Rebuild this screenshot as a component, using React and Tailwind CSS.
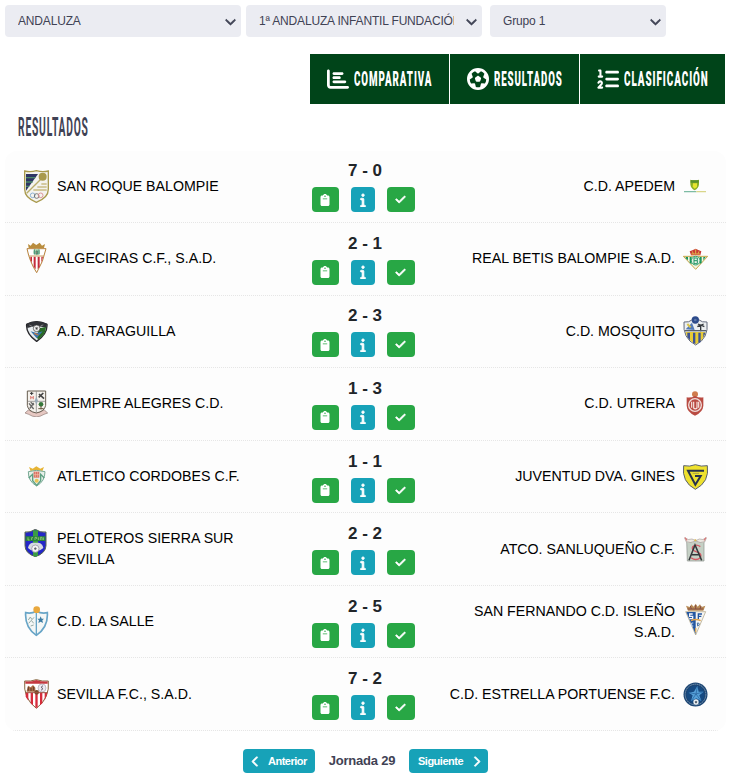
import {
  FaChartBar,
  FaCheck,
  FaChevronDown,
  FaChevronLeft,
  FaChevronRight,
  FaClipboard,
  FaFutbol,
  FaInfo,
  FaListOl,
} from "react-icons/fa6";

const crests = {
  sanRoque: (
    <svg width="25" height="33" viewBox="0 0 75 99">
      <path d="M2 3Q20 7 37 2Q55 7 73 3V58Q73 84 37 97Q2 84 2 58Z" fill="#f4f3ee" stroke="#a99a4d" strokeWidth="4" />
      <path d="M6 12H42L6 62Z" fill="#2e3564" />
      <path d="M6 23H34M6 36H26M6 49H16" stroke="#4b8a68" strokeWidth="4" />
      <path d="M58 20L8 70" stroke="#b9ad6c" strokeWidth="4" />
      <circle cx="56" cy="20" r="12" fill="#a99a4d" />
      <path d="M52 42H68M40 51H68M28 60H68" stroke="#c9bd85" strokeWidth="4" />
      <g fill="none" strokeWidth="2.5">
        <circle cx="26" cy="76" r="7" stroke="#7aa5cf" />
        <circle cx="38" cy="78" r="7" stroke="#666" />
        <circle cx="50" cy="76" r="7" stroke="#d8848a" />
      </g>
    </svg>
  ),
  algeciras: (
    <svg width="25" height="33" viewBox="0 0 75 99">
      <path d="M14 18L12 6L20 11L27 2L37 9L47 2L54 11L63 6L60 18Z" fill="#b98d3e" />
      <path d="M9 20H66Q58 60 38 92Q17 60 9 20Z" fill="#fff" stroke="#b7813b" strokeWidth="3" />
      <path d="M19 44H24V63L19 52ZM29 44H35V82L29 74ZM41 44H47V74L41 82ZM52 44H57L52 63Z" fill="#c42b3a" />
      <circle cx="38" cy="30" r="10" fill="#b8d3b0" />
      <path d="M31 22V37M45 22V37M36 27H41V36H36Z" stroke="#3d9276" strokeWidth="3" fill="#d66" />
      <path d="M15 42H60" stroke="#ca9d65" strokeWidth="3" />
    </svg>
  ),
  taraguilla: (
    <svg width="25" height="21" viewBox="0 0 75 63">
      <path d="M8 10Q37 -6 69 10Q71 38 38 61Q5 38 8 10Z" fill="#e8edf0" stroke="#29292d" strokeWidth="4" />
      <path d="M8 8Q37 -5 69 8L67 21Q38 10 10 21Z" fill="#303237" />
      <path d="M46 22L66 18Q66 40 42 56L38 47Z" fill="#286b25" />
      <path d="M20 31L38 36L56 31L38 52Z" fill="#3976ad" />
      <path d="M31 37L43 42" stroke="#c77743" strokeWidth="4" />
      <circle cx="38" cy="22" r="10" fill="#f4f4f4" stroke="#333" strokeWidth="2" />
      <path d="M34 19H42L40 26H36ZM16 12L24 16M50 14L58 12" fill="#333" stroke="#aaa" strokeWidth="2" />
    </svg>
  ),
  siempreAlegres: (
    <svg width="25" height="27" viewBox="0 0 75 81">
      <path d="M3 69L13 60Q37 74 61 60L71 69L60 73Q37 88 14 73Z" fill="#e6c8c2" stroke="#8e7773" strokeWidth="2" />
      <path d="M10 3H65V46Q62 64 37 69Q12 64 10 46Z" fill="#f5f2ed" stroke="#675d50" strokeWidth="3" />
      <path d="M37 4V68M10 34H64" stroke="#777" strokeWidth="2" />
      <path d="M18 10H28M23 6V15" stroke="#333" strokeWidth="3" />
      <path d="M20 18V28M28 18V28M20 23H28" stroke="#e1938c" strokeWidth="4" />
      <path d="M44 22L58 9M45 12L60 26" stroke="#444" strokeWidth="5" />
      <path d="M15 40L29 57M29 39L17 56M20 37L30 45" stroke="#666" strokeWidth="4" />
      <circle cx="51" cy="43" r="7" fill="#36773c" />
      <path d="M51 48V58M43 56H59" stroke="#66563f" strokeWidth="3" />
      <path d="M32 32L37 20L42 32L37 44Z" fill="#9aabb9" />
    </svg>
  ),
  cordobes: (
    <svg width="25" height="21" viewBox="0 0 75 63">
      <path d="M20 16L15 3L26 8L37 1L49 8L60 3L55 16Z" fill="#e7b434" />
      <path d="M13 17Q37 9 63 17Q63 46 38 60Q12 46 13 17Z" fill="#e6efe8" stroke="#79aa95" strokeWidth="3" />
      <path d="M14 36L26 25V44L38 58L50 44V25L61 36" fill="none" stroke="#5d9f82" strokeWidth="4" />
      <rect x="29" y="17" width="17" height="18" fill="#db6d61" />
      <path d="M34 18V34M41 18V34M29 26H46" stroke="#f0c3a7" strokeWidth="2" />
      <circle cx="38" cy="44" r="6" fill="#e9c558" />
    </svg>
  ),
  peloteros: (
    <svg width="25" height="28" viewBox="0 0 75 84">
      <path d="M3 9Q18 12 34 1Q49 12 66 9V50Q65 73 34 83Q3 73 3 50Z" fill="#2427c8" stroke="#5a6850" strokeWidth="3" />
      <path d="M27 4H42V80L34 83L27 80Z" fill="#3b9c45" />
      <path d="M5 22H64V36H5Z" fill="#27843a" />
      <path d="M12 25V33H17M23 33V26H27M33 33V25H38V30M43 25V33M49 33V25H54V33M58 25V33" fill="none" stroke="#9cc87b" strokeWidth="2.5" />
      <path d="M12 57Q14 43 26 41H43Q56 43 58 57L48 64H21Z" fill="#d6d9e1" />
      <circle cx="34" cy="59" r="11" fill="#f4f4f4" stroke="#8a8a9c" strokeWidth="2" />
      <path d="M34 55L38 58L36 62H32L30 58Z" fill="#62626f" />
    </svg>
  ),
  laSalle: (
    <svg width="25" height="31" viewBox="0 0 75 93">
      <path d="M5 20Q21 24 37 16Q54 24 70 20Q73 64 37 88Q2 64 5 20Z" fill="#f4f7f6" stroke="#68a5c7" strokeWidth="5" />
      <path d="M37 18V86" stroke="#68a5c7" strokeWidth="4" />
      <circle cx="38" cy="11" r="10" fill="#e9a83d" />
      <path d="M50 31L53 38L60 38L55 43L57 51L50 47L43 51L45 43L40 38L47 38Z" fill="#3d7da4" />
      <path d="M13 42L19 33L24 41L30 34M14 52L22 43L29 52M20 60L29 57" fill="none" stroke="#96aaa4" strokeWidth="3" />
    </svg>
  ),
  sevilla: (
    <svg width="25" height="30" viewBox="0 0 75 90">
      <path d="M2 6Q20 8 37 2Q55 8 73 6Q78 58 37 88Q-3 58 2 6Z" fill="#fff" stroke="#85653e" strokeWidth="3" />
      <path d="M4 7Q20 9 37 3Q55 9 71 7V14H4Z" fill="#c5383f" />
      <path d="M5 42H13V65L5 53ZM20 42H27V79L20 73ZM34 42H41V86H34ZM48 42H55V73L48 79ZM62 42H70L62 65Z" fill="#d62c3c" />
      <path d="M8 36L12 20L20 25L27 18L34 26V38H8Z" fill="#a96c44" />
      <path d="M13 24V35M21 27V36M29 23V35" stroke="#623c2d" strokeWidth="3" />
      <circle cx="54" cy="27" r="12" fill="#eceaf0" stroke="#a8a4ae" strokeWidth="2" />
      <path d="M57 20L51 25L57 29L51 34" fill="none" stroke="#6a6470" strokeWidth="3" />
      <circle cx="38" cy="40" r="7" fill="#7a4a2b" />
      <path d="M4 41H71" stroke="#9d5041" strokeWidth="3" />
    </svg>
  ),
  apedem: (
    <svg width="25" height="14" viewBox="0 0 75 42">
      <path d="M22 2Q35 5 48 2V16Q47 28 35 34Q23 28 22 16Z" fill="#8caf22" />
      <path d="M23 4H47V11H23Z" fill="#5a912d" />
      <path d="M30 13H42V24L35 29L29 23Z" fill="#e8e530" />
      <path d="M3 38H40" stroke="#7dbba4" strokeWidth="4" />
      <path d="M40 38H69" stroke="#d9d68a" strokeWidth="4" />
    </svg>
  ),
  betis: (
    <svg width="25" height="22" viewBox="0 0 75 66">
      <path d="M1 25H74L38 64Z" fill="#f5f3df" stroke="#c5a64a" strokeWidth="3" />
      <path d="M8 27H15V37L8 31ZM20 27H26V49L20 44ZM50 27H56V44L50 49ZM61 27H68L61 37Z" fill="#16945b" />
      <circle cx="38" cy="38" r="13" fill="#e5f1e6" stroke="#3aa471" strokeWidth="3" />
      <path d="M33 29V48M33 30H43V38H33M43 38V47H33" fill="none" stroke="#249665" strokeWidth="3" />
      <path d="M24 22L20 10L30 6L38 2L46 6L55 10L52 22Z" fill="#c93b36" />
      <path d="M25 18H51M28 10L31 18M38 4V18M48 10L45 18" stroke="#dfb34a" strokeWidth="3" />
    </svg>
  ),
  mosquito: (
    <svg width="25" height="30" viewBox="0 0 75 90">
      <path d="M3 18Q18 20 28 11H47Q57 20 72 18Q78 67 38 87Q-2 67 3 18Z" fill="#eceff1" stroke="#646b7d" strokeWidth="3" />
      <path d="M8 48H67Q66 69 38 85Q10 69 8 48Z" fill="#e7cb35" />
      <path d="M13 50H21V73L13 64ZM30 50H37V84L30 80ZM46 50H53V78L46 81ZM61 50H67L61 66Z" fill="#3c5298" />
      <path d="M8 40L27 20L35 42Z" fill="#5279b7" />
      <path d="M13 24L23 34" stroke="#dac344" strokeWidth="6" />
      <path d="M53 46V27M43 32L53 27L64 32M45 24L53 28L62 24" fill="none" stroke="#35393e" strokeWidth="4" />
      <path d="M6 44H70" stroke="#59616c" strokeWidth="4" />
      <circle cx="37" cy="12" r="11" fill="#2d4b8b" />
      <circle cx="37" cy="12" r="4" fill="#5c76a8" />
    </svg>
  ),
  utrera: (
    <svg width="25" height="25" viewBox="0 0 75 75">
      <circle cx="36" cy="10" r="9" fill="#cf7b4d" />
      <path d="M11 19Q25 21 36 15Q48 21 61 19V44Q60 63 36 74Q12 63 11 44Z" fill="#b94b42" />
      <circle cx="36" cy="42" r="19" fill="#b94b42" stroke="#f0dedb" strokeWidth="4" />
      <path d="M26 32V50M32 32V51Q37 56 42 51V32M47 32V50" fill="none" stroke="#f6e5e0" strokeWidth="3.5" />
    </svg>
  ),
  gines: (
    <svg width="25" height="26" viewBox="0 0 75 78">
      <path d="M2 5Q20 9 37 2Q55 9 73 5Q80 54 37 76Q-5 54 2 5Z" fill="#eee12e" stroke="#596069" strokeWidth="3" />
      <path d="M63 20H15L37 62L53 36H36" fill="none" stroke="#27324c" strokeWidth="6" />
      <path d="M29 28H48" stroke="#aaa246" strokeWidth="3" />
    </svg>
  ),
  sanluqueno: (
    <svg width="25" height="26" viewBox="0 0 75 78">
      <path d="M11 15L23 18L37 12L51 18L63 15V75H13Z" fill="#c5d0c5" stroke="#8c918c" strokeWidth="2" />
      <path d="M5 5Q16 14 27 9L38 14L49 9Q60 14 70 5L66 17Q52 23 38 15Q23 23 9 17Z" fill="#ece8e2" stroke="#a69c97" strokeWidth="2" />
      <path d="M6 5L12 13M69 5L63 13" stroke="#d9797a" strokeWidth="4" />
      <path d="M52 32Q39 23 29 32Q25 42 39 47Q58 52 52 65Q39 76 24 65" fill="none" stroke="#d65863" strokeWidth="4" />
      <path d="M18 73L36 27L56 73M25 56H49" fill="none" stroke="#34383b" strokeWidth="4.5" />
      <circle cx="37" cy="13" r="3" fill="#e7bd45" />
    </svg>
  ),
  sanFernando: (
    <svg width="25" height="33" viewBox="0 0 75 99">
      <path d="M15 23L9 8L20 12L25 4L32 11L38 2L44 11L51 4L56 12L67 8L61 23Z" fill="#b78a55" />
      <path d="M14 18H61M22 9L25 18M38 6V18M54 9L51 18" stroke="#844d43" strokeWidth="3" />
      <path d="M8 26H68L38 96Z" fill="#f5f5f3" stroke="#a99c79" strokeWidth="2" />
      <path d="M10 27H38V94Z" fill="#2356a1" />
      <path d="M29 33H20V40H29V47H19" fill="none" stroke="#f2f4fa" strokeWidth="4" />
      <path d="M46 48V33H57M46 40H55" fill="none" stroke="#2356a1" strokeWidth="4" />
      <path d="M24 53Q38 46 53 53" fill="none" stroke="#e1a14a" strokeWidth="4" />
      <path d="M31 60H26V69H31" fill="none" stroke="#c4d5ec" strokeWidth="3" />
      <path d="M43 60H47L49 65L44 69Z" fill="none" stroke="#4772a8" strokeWidth="3" />
      <path d="M38 75V88" stroke="#d7a656" strokeWidth="4" />
    </svg>
  ),
  estrella: (
    <svg width="25" height="25" viewBox="0 0 75 75">
      <circle cx="37.5" cy="37.5" r="36" fill="#1c4573" />
      <circle cx="37.5" cy="37.5" r="31" fill="none" stroke="#83a0ba" strokeWidth="3" strokeDasharray="4 2" />
      <circle cx="37.5" cy="37.5" r="27" fill="#164a82" />
      <path d="M43 12L47 29L62 29L49 40L55 57L40 49L24 57L29 40L17 32L33 29Z" fill="#55a0d8" />
      <path d="M43 14L39 36M60 30L39 36M53 55L39 36M26 55L39 36M19 32L39 36" stroke="#245e99" strokeWidth="2" />
      <circle cx="39" cy="60" r="8" fill="#edf1f4" />
      <path d="M39 56L43 59L41 64H37L35 59Z" fill="#53606d" />
    </svg>
  ),
};

const matches = [
  { home: "SAN ROQUE BALOMPIE", homeCrest: "sanRoque", score: "7 - 0", away: "C.D. APEDEM", awayCrest: "apedem" },
  { home: "ALGECIRAS C.F., S.A.D.", homeCrest: "algeciras", score: "2 - 1", away: "REAL BETIS BALOMPIE S.A.D.", awayCrest: "betis" },
  { home: "A.D. TARAGUILLA", homeCrest: "taraguilla", score: "2 - 3", away: "C.D. MOSQUITO", awayCrest: "mosquito" },
  { home: "SIEMPRE ALEGRES C.D.", homeCrest: "siempreAlegres", score: "1 - 3", away: "C.D. UTRERA", awayCrest: "utrera" },
  { home: "ATLETICO CORDOBES C.F.", homeCrest: "cordobes", score: "1 - 1", away: "JUVENTUD DVA. GINES", awayCrest: "gines" },
  { home: "PELOTEROS SIERRA SUR SEVILLA", homeCrest: "peloteros", score: "2 - 2", away: "ATCO. SANLUQUEÑO C.F.", awayCrest: "sanluqueno", homeLift: "pb-3" },
  { home: "C.D. LA SALLE", homeCrest: "laSalle", score: "2 - 5", away: "SAN FERNANDO C.D. ISLEÑO S.A.D.", awayCrest: "sanFernando", awayLift: "pb-[5px]" },
  { home: "SEVILLA F.C., S.A.D.", homeCrest: "sevilla", score: "7 - 2", away: "C.D. ESTRELLA PORTUENSE F.C.", awayCrest: "estrella" },
];

function Select({ label, className }) {
  return (
    <button
      className={`flex h-8 items-center justify-between rounded bg-[#ebecf2] pl-[13px] pr-[5px] text-xs tracking-[-0.17px] text-[#3f4254] ${className}`}
    >
      <span className="mr-3 flex-1 overflow-hidden whitespace-nowrap text-left">{label}</span>
      <FaChevronDown className="size-[11px] shrink-0" strokeWidth="40" stroke="currentColor" />
    </button>
  );
}

function Tab({ icon: Icon, label, className, textClassName }) {
  return (
    <button className={`flex h-[50px] items-center bg-[#004419] text-white ${className}`}>
      <Icon className="size-[22px] shrink-0" />
      <span
        className={`ml-[5px] mt-0.5 w-0 origin-left whitespace-nowrap text-left font-['Roboto',sans-serif] text-[21px] font-black tracking-[2px] ${textClassName}`}
      >
        {label}
      </span>
    </button>
  );
}

function Match({ match }) {
  return (
    <div className="flex h-[72.57px] items-center border-b border-dotted border-[#e6e6e6] bg-[#fdfdfd]">
      <div className="flex w-[297px] items-center gap-2 pl-[19px]">
        <div className={`w-[25px] shrink-0 ${match.homeLift || ""}`}>{crests[match.homeCrest]}</div>
        <p className="w-[200px]">{match.home}</p>
      </div>
      <div className="flex w-[127px] flex-col items-center">
        <p className="mr-px text-[17px] font-bold leading-6 text-[#212529]">{match.score}</p>
        <div className="mb-px mr-[5px] mt-1 flex h-[25px] w-[103px] justify-between text-white">
          <button className="flex w-[27px] items-center justify-center rounded bg-[#28a745]">
            <FaClipboard className="size-3" />
          </button>
          <button className="flex w-6 items-center justify-center rounded bg-[#17a2b8]">
            <FaInfo className="size-[14px]" strokeWidth="28" stroke="currentColor" />
          </button>
          <button className="flex w-7 items-center justify-center rounded bg-[#28a745]">
            <FaCheck className="size-[11px]" strokeWidth="36" stroke="currentColor" />
          </button>
        </div>
      </div>
      <div className="flex flex-1 items-center justify-end gap-2 pr-[18px] text-right">
        <p className="w-[232px]">{match.away}</p>
        <div className={`w-[25px] shrink-0 ${match.awayLift || ""}`}>{crests[match.awayCrest]}</div>
      </div>
    </div>
  );
}

export default function App() {
  return (
    <div className="h-[783px] w-[732px] overflow-hidden bg-white pl-[5px] pt-[5px] font-['Liberation_Sans',Arial,sans-serif]">
      <div className="flex">
        <Select label="ANDALUZA" className="w-[236px]" />
        <Select label="1ª ANDALUZA INFANTIL FUNDACIÓN" className="ml-[5px] w-[236px]" />
        <Select label="Grupo 1" className="ml-2 w-[176px]" />
      </div>

      <div className="ml-[305px] mt-[17px] flex gap-px">
        <Tab icon={FaChartBar} label="COMPARATIVA" className="w-[139px] pl-[17px]" textClassName="scale-x-[0.465]" />
        <Tab icon={FaFutbol} label="RESULTADOS" className="w-[129px] pl-[17px]" textClassName="scale-x-[0.46]" />
        <Tab icon={FaListOl} label="CLASIFICACIÓN" className="w-[145px] pl-[17px]" textClassName="scale-x-[0.47]" />
      </div>

      <h1 className="ml-[13px] mt-2 h-[38.5px] w-[71px] origin-left scale-x-[0.41] whitespace-nowrap font-['Roboto',sans-serif] text-[25px] font-bold leading-8 tracking-[2px] text-[#3f4254]">
        RESULTADOS
      </h1>

      <div className="w-[721px] overflow-hidden rounded-xl text-[14.2px] leading-[21px] text-black">
        {matches.map((match) => (
          <Match key={match.home} match={match} />
        ))}
      </div>

      <div className="ml-[238px] mt-[18px] flex h-6 items-center text-[11px] font-bold text-white">
        <button className="flex h-6 w-[72px] items-center rounded bg-[#17a2b8] pl-[7px] tracking-[-0.5px]">
          <FaChevronLeft className="size-[11px]" strokeWidth="36" stroke="currentColor" />
          <span className="ml-[7px]">Anterior</span>
        </button>
        <span className="w-[94px] text-center text-[13px] tracking-[-0.2px] text-[#3f4254]">Jornada 29</span>
        <button className="flex h-6 w-[79px] items-center justify-between rounded bg-[#17a2b8] pl-[9px] pr-1.5 tracking-[-0.5px]">
          Siguiente
          <FaChevronRight className="size-[11px]" strokeWidth="36" stroke="currentColor" />
        </button>
      </div>
    </div>
  );
}
